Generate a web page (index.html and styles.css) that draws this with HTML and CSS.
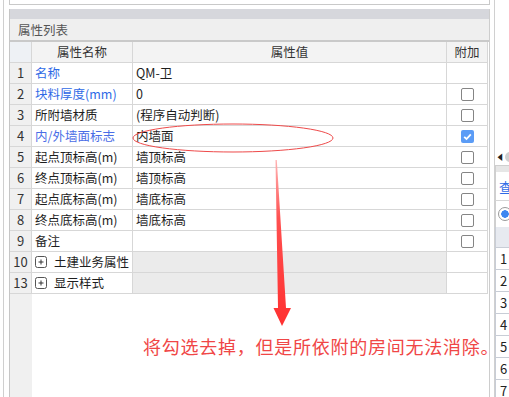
FILE: index.html
```html
<!DOCTYPE html>
<html lang="zh-CN">
<head>
<meta charset="utf-8">
<title>属性列表</title>
<link rel="stylesheet" href="styles.css">
</head>
<body>
<div class="screen">
  <div class="edge"></div>
  <div class="gap"></div>
  <div class="main">
    <div class="topbox"></div>
    <div class="spacer"></div>
    <div class="panel">
      <div class="band"></div>
      <div class="title">属性列表</div>
      <table class="grid">
        <colgroup>
          <col class="c-num"><col class="c-name"><col class="c-val"><col class="c-add">
        </colgroup>
        <thead>
          <tr><th class="num"></th><th>属性名称</th><th>属性值</th><th>附加</th></tr>
        </thead>
        <tbody>
          <tr><td class="num">1</td><td class="blue">名称</td><td>QM-卫</td><td></td></tr>
          <tr><td class="num">2</td><td class="blue">块料厚度(mm)</td><td>0</td><td><div class="cb"><span class="box"></span></div></td></tr>
          <tr><td class="num">3</td><td>所附墙材质</td><td>(程序自动判断)</td><td><div class="cb"><span class="box"></span></div></td></tr>
          <tr><td class="num">4</td><td class="blue b2">内/外墙面标志</td><td>内墙面</td><td><div class="cb"><span class="box on"><svg viewBox="0 0 13 13" width="13" height="13"><path d="M3.2 6.8 L5.5 9 L9.8 4.3" fill="none" stroke="#fff" stroke-width="1.8"/></svg></span></div></td></tr>
          <tr><td class="num">5</td><td>起点顶标高(m)</td><td>墙顶标高</td><td><div class="cb"><span class="box"></span></div></td></tr>
          <tr><td class="num">6</td><td>终点顶标高(m)</td><td>墙顶标高</td><td><div class="cb"><span class="box"></span></div></td></tr>
          <tr><td class="num">7</td><td>起点底标高(m)</td><td>墙底标高</td><td><div class="cb"><span class="box"></span></div></td></tr>
          <tr><td class="num">8</td><td>终点底标高(m)</td><td>墙底标高</td><td><div class="cb"><span class="box"></span></div></td></tr>
          <tr><td class="num">9</td><td>备注</td><td></td><td><div class="cb"><span class="box"></span></div></td></tr>
          <tr class="group"><td class="num">10</td><td><span class="grp"><svg class="plus" viewBox="0 0 12 12" width="12" height="12"><rect x="0.5" y="0.5" width="11" height="11" rx="2" fill="#fff" stroke="#555"/><path d="M3.5 6H8.5M6 3.5V8.5" stroke="#333" stroke-width="1"/></svg>土建业务属性</span></td><td class="shade"></td><td></td></tr>
          <tr class="group"><td class="num">13</td><td><span class="grp"><svg class="plus" viewBox="0 0 12 12" width="12" height="12"><rect x="0.5" y="0.5" width="11" height="11" rx="2" fill="#fff" stroke="#555"/><path d="M3.5 6H8.5M6 3.5V8.5" stroke="#333" stroke-width="1"/></svg>显示样式</span></td><td class="shade"></td><td></td></tr>
        </tbody>
      </table>
      <div class="filler"><div class="numfill"></div></div>
    </div>
  </div>
  <div class="gap2"></div>
  <div class="side">
    <div class="side-top"><span class="arrow">◀</span><span class="knob"></span></div>
    <div class="side-bar"></div>
    <div class="side-tab">查</div>
    <div class="side-radio"><span class="radio"></span></div>
    <div class="side-head"></div>
    <div class="side-row">1</div>
    <div class="side-row">2</div>
    <div class="side-row">3</div>
    <div class="side-row">4</div>
    <div class="side-row">5</div>
    <div class="side-row">6</div>
    <div class="side-row">7</div>
  </div>

  <svg class="marks" viewBox="0 0 509 397" width="509" height="397">
    <defs>
      <linearGradient id="shaft" x1="0" y1="0" x2="0" y2="1">
        <stop offset="0" stop-color="#ffb3b3"/>
        <stop offset="0.35" stop-color="#ff5050"/>
        <stop offset="1" stop-color="#ff3030"/>
      </linearGradient>
    </defs>
    <ellipse cx="233" cy="138" rx="100" ry="14" fill="none" stroke="#ee4a4a" stroke-width="1"/>
    <polygon points="275.5,160 276.8,160 286,308 291,308 282,326 273.5,308 278,308" fill="url(#shaft)"/>
  </svg>
  <p class="note">将勾选去掉，但是所依附的房间无法消除。</p>
</div>
</body>
</html>
```

FILE: styles.css
```css
html, body {
  margin: 0;
  padding: 0;
  background: #ffffff;
  overflow: hidden;
}

.screen {
  position: relative;
  width: 509px;
  height: 397px;
  display: flex;
  font-family: "Noto Sans CJK SC", "Microsoft YaHei", sans-serif;
  font-size: 12.5px;
  color: #1e1e1e;
  overflow: hidden;
}

.edge {
  width: 3px;
  border-right: 1px solid #cfcfcf;
  flex: none;
}

.gap {
  width: 5px;
  flex: none;
}

.main {
  width: 481px;
  flex: none;
  display: flex;
  flex-direction: column;
}

.topbox {
  height: 4px;
  border: 1px solid #c9c9c9;
  border-top: none;
  background: #fff;
  flex: none;
}

.spacer {
  height: 4px;
  flex: none;
}

.panel {
  flex: 1;
  display: flex;
  flex-direction: column;
  border-left: 1px solid #c6c6c6;
  border-right: 1px solid #cdcdcd;
}

.band {
  height: 10px;
  background: #d6d7dc;
  flex: none;
}

.title {
  height: 21px;
  line-height: 21px;
  background: #efefef;
  color: #555;
  padding-left: 8px;
  border-bottom: 2px solid #c9c9c9;
  font-size: 12.5px;
  flex: none;
}

.grid {
  width: 478px;
  border-collapse: separate;
  border-spacing: 0;
  table-layout: fixed;
  flex: none;
}

.c-num { width: 22px; }
.c-name { width: 101px; }
.c-val { width: 314px; }
.c-add { width: 41px; }

.grid th,
.grid td {
  height: 20px;
  padding: 0 0 0 3px;
  line-height: 20px;
  border-right: 1px solid #d7d7d7;
  border-bottom: 1px solid #d7d7d7;
  white-space: nowrap;
  overflow: hidden;
  text-align: left;
  font-weight: normal;
  box-sizing: content-box;
}

.grid th {
  background: #f3f3f3;
  text-align: center;
  color: #333;
  padding: 0;
}

.grid th.num {
  background: #eef1f5;
}

.grid td.num {
  background: #f0f0f0;
  text-align: center;
  padding: 0;
  color: #333;
  font-size: 13px;
}

.blue {
  color: #2f6ae6;
}

.b2 {
  color: #4a6de6;
}

.shade {
  background: #ebebeb;
}

.grid td:last-child {
  padding: 0;
}

.cb {
  height: 20px;
  display: flex;
  align-items: center;
  justify-content: center;
}

.box {
  width: 11px;
  height: 11px;
  border: 1px solid #858585;
  border-radius: 2px;
  background: #fff;
  display: flex;
}

.box.on {
  width: 13px;
  height: 13px;
  border: none;
  background: #5b9cf6;
}

.grp {
  display: flex;
  align-items: center;
  gap: 7px;
  height: 20px;
}

.plus {
  flex: none;
}

.filler {
  flex: 1;
  display: flex;
}

.numfill {
  width: 22px;
  background: #f0f0f0;
}

.gap2 {
  width: 4px;
  border-right: 1px solid #d0d0d0;
  flex: none;
}

.side {
  flex: 1;
  min-width: 0;
  display: flex;
  flex-direction: column;
  overflow: hidden;
}

.side > * {
  flex: none;
}

.side-top {
  height: 165px;
  display: flex;
  align-items: flex-end;
  gap: 1px;
  padding-left: 1px;
  box-sizing: border-box;
  padding-bottom: 3px;
}

.arrow {
  font-size: 8px;
  line-height: 10px;
  color: #222;
  transform: scaleX(0.7);
}

.knob {
  width: 10px;
  height: 10px;
  border-radius: 50%;
  background: #cfcfcf;
  flex: none;
}

.side-bar {
  height: 6px;
  background: #e6e6e6;
  border-top: 1px solid #cfcfcf;
  border-left: 1px solid #cfcfcf;
}

.side-tab {
  height: 28px;
  line-height: 30px;
  background: #fff;
  color: #2f6ae6;
  font-size: 13px;
  padding-left: 3px;
  border-left: 1px solid #cfcfcf;
  border-bottom: 1px solid #d6d6d6;
  white-space: nowrap;
}

.side-radio {
  height: 26px;
  display: flex;
  align-items: center;
  padding-left: 2px;
  border-left: 1px solid #cfcfcf;
}

.radio {
  width: 12px;
  height: 12px;
  border-radius: 50%;
  border: 1px solid #999;
  background: radial-gradient(circle, #3d86f0 0 3.5px, #fff 4px);
  flex: none;
}

.side-head {
  height: 20px;
  background: #e7eaf0;
  border-left: 1px solid #c8cdd6;
  border-bottom: 1px solid #c8cdd6;
}

.side-row {
  height: 21px;
  line-height: 21px;
  padding-left: 4px;
  font-size: 13px;
  color: #222;
  border-left: 1px solid #c8cdd6;
  border-bottom: 1px solid #c8cdd6;
}

.marks {
  position: absolute;
  left: 0;
  top: 0;
  pointer-events: none;
}

.note {
  position: absolute;
  left: 143px;
  top: 337px;
  margin: 0;
  font-size: 18px;
  line-height: 18px;
  letter-spacing: 0.75px;
  color: #f04646;
  white-space: nowrap;
}
```
